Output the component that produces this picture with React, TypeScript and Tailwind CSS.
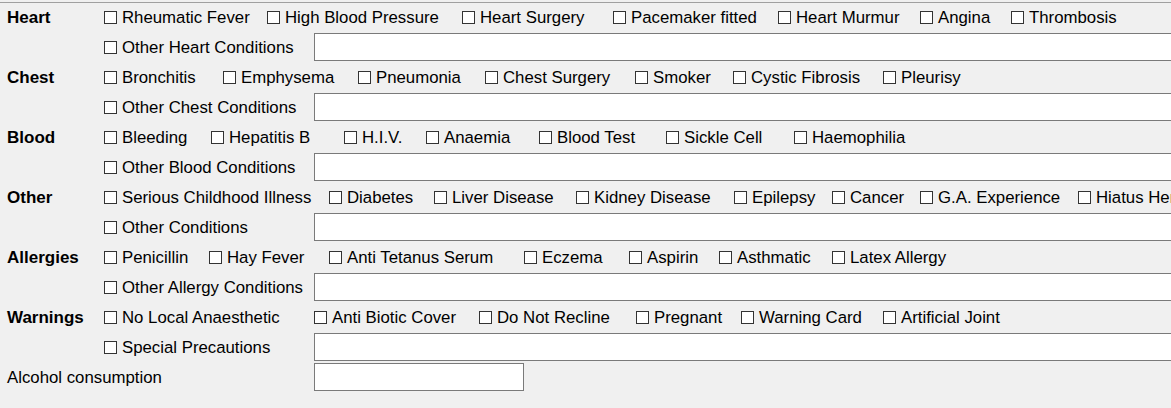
import React from "react";

type Item = { label: string; x: number };

const groups: { title: string; items: Item[]; other: string }[] = [
  {
    title: "Heart",
    items: [
      { label: "Rheumatic Fever", x: 104 },
      { label: "High Blood Pressure", x: 267 },
      { label: "Heart Surgery", x: 462 },
      { label: "Pacemaker fitted", x: 613 },
      { label: "Heart Murmur", x: 778 },
      { label: "Angina", x: 920 },
      { label: "Thrombosis", x: 1011 },
    ],
    other: "Other Heart Conditions",
  },
  {
    title: "Chest",
    items: [
      { label: "Bronchitis", x: 104 },
      { label: "Emphysema", x: 223 },
      { label: "Pneumonia", x: 358 },
      { label: "Chest Surgery", x: 485 },
      { label: "Smoker", x: 635 },
      { label: "Cystic Fibrosis", x: 733 },
      { label: "Pleurisy", x: 883 },
    ],
    other: "Other Chest Conditions",
  },
  {
    title: "Blood",
    items: [
      { label: "Bleeding", x: 104 },
      { label: "Hepatitis B", x: 211 },
      { label: "H.I.V.", x: 344 },
      { label: "Anaemia", x: 426 },
      { label: "Blood Test", x: 539 },
      { label: "Sickle Cell", x: 666 },
      { label: "Haemophilia", x: 794 },
    ],
    other: "Other Blood Conditions",
  },
  {
    title: "Other",
    items: [
      { label: "Serious Childhood Illness", x: 104 },
      { label: "Diabetes", x: 329 },
      { label: "Liver Disease", x: 434 },
      { label: "Kidney Disease", x: 576 },
      { label: "Epilepsy", x: 734 },
      { label: "Cancer", x: 832 },
      { label: "G.A. Experience", x: 920 },
      { label: "Hiatus Hernia", x: 1078 },
    ],
    other: "Other Conditions",
  },
  {
    title: "Allergies",
    items: [
      { label: "Penicillin", x: 104 },
      { label: "Hay Fever", x: 209 },
      { label: "Anti Tetanus Serum", x: 329 },
      { label: "Eczema", x: 524 },
      { label: "Aspirin", x: 629 },
      { label: "Asthmatic", x: 719 },
      { label: "Latex Allergy", x: 832 },
    ],
    other: "Other Allergy Conditions",
  },
  {
    title: "Warnings",
    items: [
      { label: "No Local Anaesthetic", x: 104 },
      { label: "Anti Biotic Cover", x: 314 },
      { label: "Do Not Recline", x: 479 },
      { label: "Pregnant", x: 636 },
      { label: "Warning Card", x: 741 },
      { label: "Artificial Joint", x: 883 },
    ],
    other: "Special Precautions",
  },
];

const Check = ({ label, width }: { label: string; width?: number }) => (
  <label
    className="flex items-center shrink-0 whitespace-nowrap"
    style={width ? { width } : undefined}
  >
    <span className="w-[13px] h-[13px] border border-[#333333] bg-white shrink-0" />
    <span className="ml-[5px]">{label}</span>
  </label>
);

export default function App() {
  return (
    <div
      className="w-[1171px] h-[408px] overflow-hidden bg-[#f0f0f0] pt-[2px] text-[16.8px] text-black"
      style={{ fontFamily: '"Liberation Sans", Arial, sans-serif' }}
    >
      <div className="h-px bg-[#a0a0a0]" />
      {groups.map((g) => (
        <div key={g.title}>
          <div className="flex items-center h-[30px] pb-[1px]">
            <div className="w-[104px] shrink-0 pl-[7px] font-bold text-[17px]">
              {g.title}
            </div>
            {g.items.map((it, i) => {
              const next = g.items[i + 1];
              return (
                <Check
                  key={it.label}
                  label={it.label}
                  width={next ? next.x - it.x : undefined}
                />
              );
            })}
          </div>
          <div className="flex items-start h-[30px]">
            <div className="w-[104px] shrink-0" />
            <div className="w-[210px] h-[29px] flex items-center shrink-0">
              <Check label={g.other} />
            </div>
            <input
              type="text"
              className="h-[28px] w-[880px] shrink-0 border border-[#7a7a7a] bg-white outline-none"
            />
          </div>
        </div>
      ))}
      <div className="flex items-start h-[30px]">
        <div className="w-[314px] h-[29px] shrink-0 flex items-center pl-[7px]">
          Alcohol consumption
        </div>
        <input
          type="text"
          className="h-[28px] w-[210px] shrink-0 border border-[#7a7a7a] bg-white outline-none"
        />
      </div>
    </div>
  );
}
